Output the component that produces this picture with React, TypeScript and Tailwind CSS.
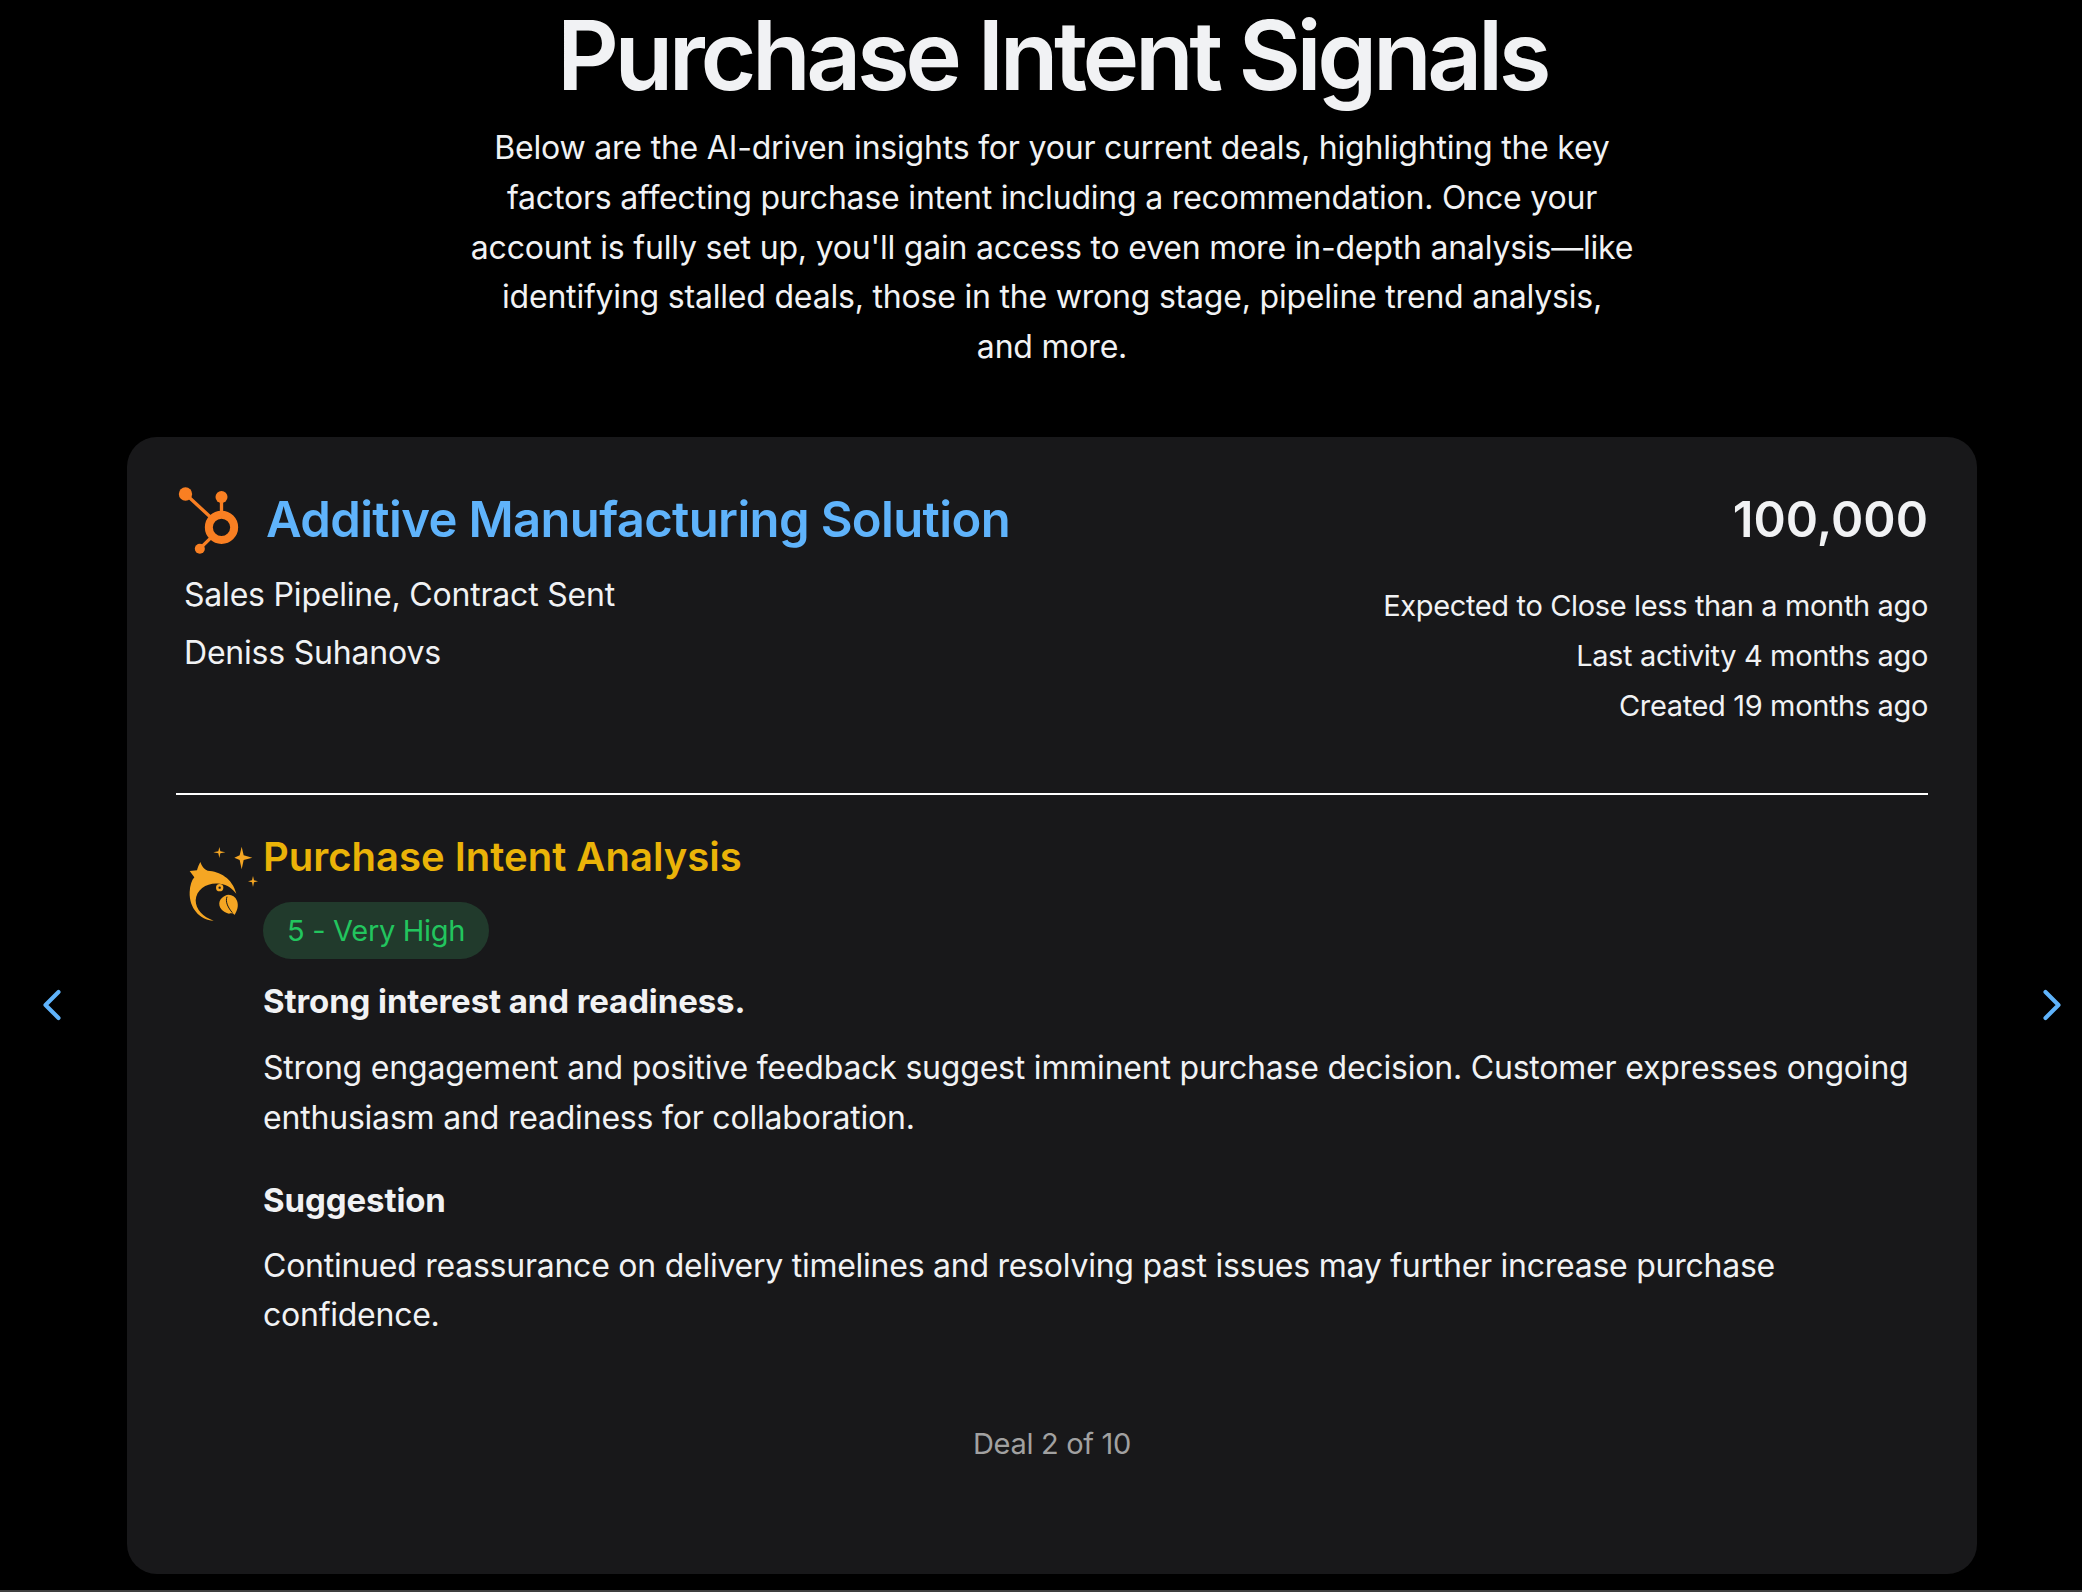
import { ChevronLeft, ChevronRight } from "lucide-react"

function HubspotLogo() {
  return (
    <svg viewBox="50 70 200 210" className="w-[67px] h-[70px] shrink-0" fill="#f97f22">
      <circle cx="78" cy="97" r="20" />
      <circle cx="186" cy="106" r="18" />
      <circle cx="121" cy="261" r="15" />
      <path d="M78 97 L186 197 M186 106 V197 M121 261 L186 197" stroke="#f97f22" strokeWidth="10" fill="none" />
      <circle cx="186" cy="197" r="38" fill="#18181a" stroke="#f97f22" strokeWidth="24" />
    </svg>
  )
}

function ParrotLogo() {
  return (
    <svg viewBox="28 22 210 228" className="w-[70px] h-[76px] shrink-0" fill="#f5a623">
      <path d="M186 24 L192 50 L218 57 L192 64 L186 92 L180 64 L164 57 L180 50Z" />
      <path d="M119 25 L122 38 L137 41 L122 44 L119 58 L116 44 L101 41 L116 38Z" />
      <path d="M220 112 L223 125 L235 128 L223 131 L220 145 L217 131 L205 128 L217 125Z" />
      <path d="M30 97 L52 95 C54 86 58 78 62 70 C66 82 72 92 84 96 C120 98 158 118 170 165 C158 150 145 138 120 135 C85 130 50 150 48 185 C48 212 70 235 102 246 C60 244 28 208 30 160 C31 140 36 125 44 116 Z" />
      <path d="M135 172 C148 164 165 170 172 186 C178 202 172 218 164 229 C160 222 154 224 148 225 C130 222 114 205 120 188 C123 180 128 176 135 172Z" />
      <path d="M142 174 C136 190 146 208 158 222" stroke="#18181a" strokeWidth="3" fill="none" />
      <circle cx="120" cy="147" r="11" />
      <circle cx="120" cy="147" r="3.5" fill="#18181a" />
    </svg>
  )
}

export default function App() {
  return (
    <div className="h-[1592px] flex flex-col overflow-hidden bg-black text-[#f1f2f4] font-['Inter',sans-serif]">
      <div className="flex flex-col items-center pt-[3px] pl-[22px]">
        <h1 className="text-[96px] leading-[104px] font-semibold tracking-[-4.4px]">Purchase Intent Signals</h1>
        <p className="mt-[16px] w-[1180px] text-center text-[32px] leading-[49.8px] tracking-[-0.2px]">
          Below are the AI-driven insights for your current deals, highlighting the key factors affecting purchase intent including a recommendation. Once your account is fully set up, you'll gain access to even more in-depth analysis—like identifying stalled deals, those in the wrong stage, pipeline trend analysis,<br />and more.
        </p>
      </div>

      <div className="mt-[65px] flex items-center">
        <div className="w-[127px] flex justify-center pr-[23px]">
          <ChevronLeft size={52} strokeWidth={1.9} className="text-[#5fb3fb]" />
        </div>

        <div className="w-[1850px] h-[1137px] rounded-[30px] bg-[#18181a] px-[49px] pt-[48px]">
          <div className="flex justify-between h-[310px] border-b-2 border-white">
            <div>
              <div className="flex items-center gap-[23px]">
                <HubspotLogo />
                <span className="text-[49px] leading-[70px] font-semibold tracking-[-0.64px] text-[#5fb3fb]">Additive Manufacturing Solution</span>
              </div>
              <div className="mt-[18px] pl-[8px] text-[32px] leading-[44px] tracking-[-0.2px]">Sales Pipeline, Contract Sent</div>
              <div className="mt-[14px] pl-[8px] text-[32px] leading-[44px] tracking-[-0.2px]">Deniss Suhanovs</div>
            </div>
            <div className="text-right">
              <div className="text-[49px] leading-[70px] font-semibold">100,000</div>
              <div className="mt-[26px] text-[29px] leading-[49.8px] tracking-[-0.36px]">Expected to Close less than a month ago</div>
              <div className="text-[29px] leading-[49.8px] tracking-[-0.36px]">Last activity 4 months ago</div>
              <div className="text-[29px] leading-[49.8px] tracking-[-0.36px]">Created 19 months ago</div>
            </div>
          </div>

          <div className="flex mt-[34px] pl-[9px]">
            <div className="w-[78px] pl-[4px] pt-[17px]"><ParrotLogo /></div>
            <div className="flex-1">
              <h2 className="text-[40px] leading-[56px] font-semibold text-[#eab308]">Purchase Intent Analysis</h2>
              <div className="mt-[17px] inline-flex h-[57px] items-center rounded-full bg-[#213a2c] px-[24px] text-[29px] tracking-[-0.3px] text-[#22c55e]">5 - Very High</div>
              <div className="mt-[20px] text-[33px] leading-[44px] font-bold tracking-[-0.1px]">Strong interest and readiness.</div>
              <p className="mt-[20px] text-[32px] leading-[49.8px] tracking-[-0.2px]">Strong engagement and positive feedback suggest imminent purchase decision. Customer expresses ongoing enthusiasm and readiness for collaboration.</p>
              <div className="mt-[35px] text-[33px] leading-[44px] font-bold tracking-[-0.1px]">Suggestion</div>
              <p className="mt-[19px] text-[32px] leading-[49.8px] tracking-[-0.25px]">Continued reassurance on delivery timelines and resolving past issues may further increase purchase confidence.</p>
            </div>
          </div>

          <div className="mt-[84px] text-center text-[29px] leading-[40px] tracking-[-0.3px] text-[#a1a1a1]">Deal 2 of 10</div>
        </div>

        <div className="w-[105px] flex justify-center pl-[45px]">
          <ChevronRight size={52} strokeWidth={1.9} className="text-[#5fb3fb]" />
        </div>
      </div>

      <div className="mt-auto h-[2px] bg-[#3f3f3f]" />
    </div>
  )
}
